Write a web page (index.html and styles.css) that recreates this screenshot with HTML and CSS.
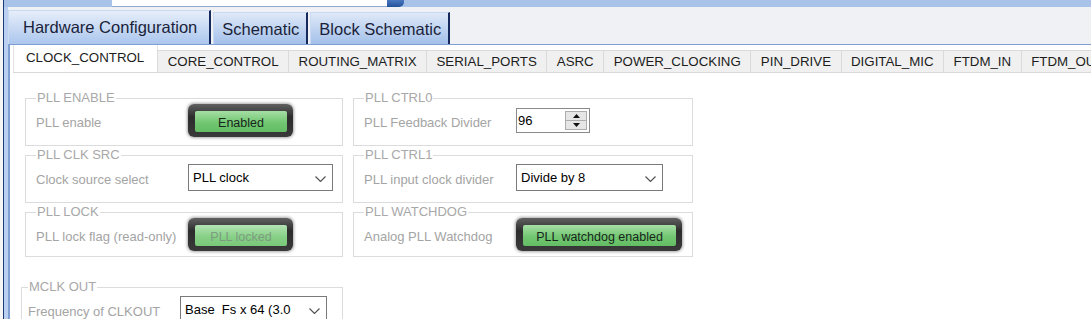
FILE: index.html
```html
<!DOCTYPE html>
<html lang="en">
<head>
    <meta charset="UTF-8">
    <meta name="viewport" content="width=device-width, initial-scale=1.0">
    <title>Hardware Configuration</title>
    <link rel="stylesheet" href="styles.css">
</head>
<body>

    <div class="window">

        <!-- top search strip -->
        <div class="topbar">
            <div class="topbar-field"></div>
            <div class="topbar-drop"></div>
        </div>

        <div class="main">
            <!-- main view tabs -->
            <div class="tabstrip">
                <div class="maintab active">Hardware Configuration</div>
                <div class="maintab">Schematic</div>
                <div class="maintab">Block Schematic</div>
            </div>

            <div class="panel">
                <!-- register page tabs -->
                <div class="subtabs">
                    <div class="subtab active">CLOCK_CONTROL</div>
                    <div class="subtab">CORE_CONTROL</div>
                    <div class="subtab">ROUTING_MATRIX</div>
                    <div class="subtab">SERIAL_PORTS</div>
                    <div class="subtab">ASRC</div>
                    <div class="subtab">POWER_CLOCKING</div>
                    <div class="subtab">PIN_DRIVE</div>
                    <div class="subtab">DIGITAL_MIC</div>
                    <div class="subtab">FTDM_IN</div>
                    <div class="subtab">FTDM_OUT</div>
                </div>

                <div class="page">
                    <div class="grid">
                        <fieldset class="group">
                            <legend>PLL ENABLE</legend>
                            <div class="field">
                                <span class="label">PLL enable</span>
                                <div class="toggle small"><span>Enabled</span></div>
                            </div>
                        </fieldset>

                        <fieldset class="group">
                            <legend>PLL CTRL0</legend>
                            <div class="field">
                                <span class="label">PLL Feedback Divider</span>
                                <div class="spin">
                                    <span class="spin-value">96</span>
                                    <div class="spin-btns">
                                        <div class="spin-btn"><svg width="7" height="4" viewBox="0 0 7 4"><polygon points="3.5,0 7,4 0,4" fill="#111"/></svg></div>
                                        <div class="spin-btn"><svg width="7" height="4" viewBox="0 0 7 4"><polygon points="0,0 7,0 3.5,4" fill="#111"/></svg></div>
                                    </div>
                                </div>
                            </div>
                        </fieldset>

                        <fieldset class="group">
                            <legend>PLL CLK SRC</legend>
                            <div class="field">
                                <span class="label">Clock source select</span>
                                <div class="select">
                                    <span class="select-text">PLL clock</span>
                                    <span class="chevron"><svg width="11" height="6" viewBox="0 0 11 6"><polyline points="0.5,0.5 5.5,5.5 10.5,0.5" fill="none" stroke="#555" stroke-width="1.2"/></svg></span>
                                </div>
                            </div>
                        </fieldset>

                        <fieldset class="group">
                            <legend>PLL CTRL1</legend>
                            <div class="field">
                                <span class="label">PLL input clock divider</span>
                                <div class="select">
                                    <span class="select-text">Divide by 8</span>
                                    <span class="chevron"><svg width="11" height="6" viewBox="0 0 11 6"><polyline points="0.5,0.5 5.5,5.5 10.5,0.5" fill="none" stroke="#555" stroke-width="1.2"/></svg></span>
                                </div>
                            </div>
                        </fieldset>

                        <fieldset class="group tight">
                            <legend>PLL LOCK</legend>
                            <div class="field">
                                <span class="label">PLL lock flag (read-only)</span>
                                <div class="toggle small disabled"><span>PLL locked</span></div>
                            </div>
                        </fieldset>

                        <fieldset class="group tight">
                            <legend>PLL WATCHDOG</legend>
                            <div class="field">
                                <span class="label">Analog PLL Watchdog</span>
                                <div class="toggle wide"><span>PLL watchdog enabled</span></div>
                            </div>
                        </fieldset>
                    </div>

                    <fieldset class="group mclk">
                        <legend>MCLK OUT</legend>
                        <div class="field">
                            <span class="label">Frequency of CLKOUT</span>
                            <div class="select">
                                <span class="select-text">Base&nbsp;&nbsp;Fs x 64 (3.0</span>
                                <span class="chevron"><svg width="11" height="6" viewBox="0 0 11 6"><polyline points="0.5,0.5 5.5,5.5 10.5,0.5" fill="none" stroke="#555" stroke-width="1.2"/></svg></span>
                            </div>
                        </div>
                    </fieldset>
                </div>
            </div>
        </div>
    </div>

</body>
</html>
```

FILE: styles.css
```css
body {
    margin: 0;
    padding: 0;
    background-color: #f6f6f6;
    font-family: "Liberation Sans", Arial, sans-serif;
    overflow: hidden;
}

/* outer window frame */
.window {
    margin-left: 3px;
    border-left: 1px solid #1f3a78;
    background-color: #b9d0f0;
    min-height: 100vh;
    display: flex;
    flex-direction: column;
}

.topbar {
    height: 7px;
    display: flex;
    padding-left: 108px;
    background-color: #a8c2e8;
}

.topbar-field {
    width: 275px;
    height: 6px;
    background-color: #fff;
    border-bottom: 1px solid #8ea7cc;
}

.topbar-drop {
    width: 17px;
    height: 7px;
    background: linear-gradient(#4a78c0, #23509a);
    border-radius: 0 0 5px 0;
}

.main {
    margin-left: 4px;
    flex: 1;
    display: flex;
    flex-direction: column;
}

/* Main Tabs */
.tabstrip {
    height: 37px;
    display: flex;
    align-items: flex-end;
    gap: 2px;
    background-color: #f0f1f4;
}

.maintab {
    height: 30px;
    display: flex;
    align-items: center;
    padding: 1px 7px 0 8px;
    border-top: 1px solid #c9d9f0;
    border-left: 1px solid #c9d9f0;
    border-right: 2px solid #15295c;
    background: linear-gradient(#dfe9f8, #a3c0ea);
    color: #1b1f3a;
    font-size: 16.5px;
}

.maintab.active {
    height: 33px;
    padding: 0 12px 0 14px;
    background: linear-gradient(#e6eefa, #abc6ed);
}

/* Tab panel */
.panel {
    flex: 1;
    border-left: 2px solid #7f9fd3;
    border-top: 1px solid #7f9fd3;
    background-color: #fff;
    padding-left: 3px;
}

.subtabs {
    height: 27px;
    display: flex;
    align-items: flex-end;
    border-bottom: 1px solid #d9d9d9;
    white-space: nowrap;
    overflow: hidden;
}

.subtab {
    height: 21px;
    display: flex;
    align-items: center;
    padding: 0 9.5px;
    border: 1px solid #dadada;
    border-bottom: none;
    margin-left: -1px;
    background-color: #f0f0f0;
    color: #1c1c1c;
    font-size: 13.3px;
    flex-shrink: 0;
}

.subtab.active {
    height: 25px;
    margin-left: 0;
    margin-bottom: -1px;
    padding: 0 13px 3px 12px;
    background-color: #fff;
    border-color: #e4e4e4;
}

/* Register page */
.page {
    padding: 19px 0 0 12px;
}

.grid {
    display: grid;
    grid-template-columns: 318px 340px;
    column-gap: 10px;
    row-gap: 3px;
}

.group {
    margin: 0;
    padding: 0 9px 8px 10px;
    border: 1px solid #dcdcdc;
    min-width: 0;
}

.group.tight {
    padding-bottom: 5px;
}

.group legend {
    padding: 0 1px;
    font-size: 13px;
    line-height: 12px;
    color: #a8a8a8;
}

.group.mclk {
    width: 322px;
    box-sizing: border-box;
    margin: 24px 0 0 -4px;
    padding-left: 6px;
}

.field {
    height: 33px;
    display: flex;
    align-items: center;
}

.label {
    width: 152px;
    flex-shrink: 0;
    padding-top: 3px;
    font-size: 13px;
    color: #a4a4a4;
    white-space: nowrap;
}

/* green state buttons */
.toggle {
    height: 33px;
    box-sizing: border-box;
    padding: 7px 6px 5px 7px;
    border-radius: 6px;
    background: linear-gradient(#606060, #2c2c2c 40%, #3a3a3a);
    box-shadow: 0 0 3px 1px rgba(0, 0, 0, 0.35);
    display: flex;
}

.toggle span {
    flex: 1;
    display: flex;
    align-items: center;
    justify-content: center;
    padding-top: 2px;
    border-radius: 2px;
    background: linear-gradient(#a6dea6, #72c772 55%, #63bd63);
    font-size: 12.5px;
    color: #17251a;
}

.toggle.small {
    width: 105px;
}

.toggle.wide {
    width: 166px;
}

.toggle.disabled span {
    background: linear-gradient(#b4e2b4, #87d087 55%, #79c879);
    color: #7c9c80;
}

/* numeric spin box */
.spin {
    width: 74px;
    height: 25px;
    box-sizing: border-box;
    border: 1px solid #8a8a8a;
    background-color: #fff;
    display: flex;
}

.spin-value {
    flex: 1;
    display: flex;
    align-items: center;
    padding-left: 1px;
    font-size: 13px;
    color: #000;
}

.spin-btns {
    width: 20px;
    margin: 2px 2px 2px 0;
    border: 1px solid #adadad;
    background-color: #e6e6e6;
    display: flex;
    flex-direction: column;
}

.spin-btn {
    flex: 1;
    display: flex;
    align-items: center;
    justify-content: center;
}

.spin-btn + .spin-btn {
    border-top: 1px solid #adadad;
}

/* drop down list */
.select {
    width: 147px;
    height: 27px;
    box-sizing: border-box;
    border: 1px solid #7a7a7a;
    background-color: #fff;
    display: flex;
    align-items: center;
}

.select-text {
    flex: 1;
    padding-left: 4px;
    font-size: 13px;
    color: #000;
    white-space: nowrap;
    overflow: hidden;
}

.chevron {
    width: 24px;
    flex-shrink: 0;
    display: flex;
    justify-content: center;
    padding-top: 2px;
}
```
